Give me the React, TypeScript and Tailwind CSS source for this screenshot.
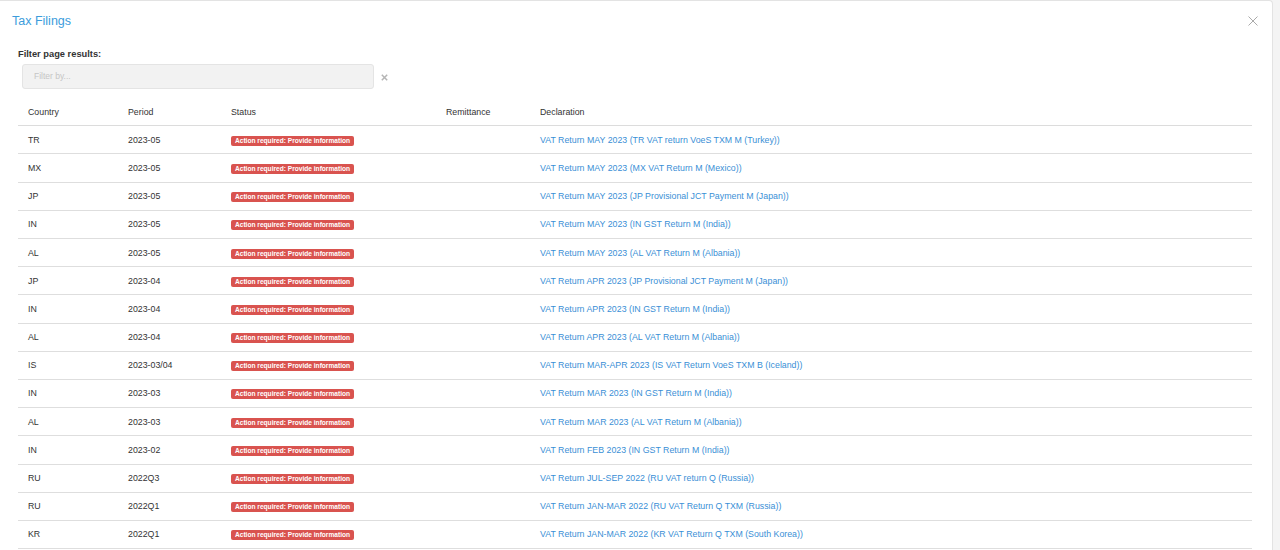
import React from "react";

const rows: [string, string, string][] = [
  ["TR", "2023-05", "VAT Return MAY 2023 (TR VAT return VoeS TXM M (Turkey))"],
  ["MX", "2023-05", "VAT Return MAY 2023 (MX VAT Return M (Mexico))"],
  ["JP", "2023-05", "VAT Return MAY 2023 (JP Provisional JCT Payment M (Japan))"],
  ["IN", "2023-05", "VAT Return MAY 2023 (IN GST Return M (India))"],
  ["AL", "2023-05", "VAT Return MAY 2023 (AL VAT Return M (Albania))"],
  ["JP", "2023-04", "VAT Return APR 2023 (JP Provisional JCT Payment M (Japan))"],
  ["IN", "2023-04", "VAT Return APR 2023 (IN GST Return M (India))"],
  ["AL", "2023-04", "VAT Return APR 2023 (AL VAT Return M (Albania))"],
  ["IS", "2023-03/04", "VAT Return MAR-APR 2023 (IS VAT Return VoeS TXM B (Iceland))"],
  ["IN", "2023-03", "VAT Return MAR 2023 (IN GST Return M (India))"],
  ["AL", "2023-03", "VAT Return MAR 2023 (AL VAT Return M (Albania))"],
  ["IN", "2023-02", "VAT Return FEB 2023 (IN GST Return M (India))"],
  ["RU", "2022Q3", "VAT Return JUL-SEP 2022 (RU VAT return Q (Russia))"],
  ["RU", "2022Q1", "VAT Return JAN-MAR 2022 (RU VAT Return Q TXM (Russia))"],
  ["KR", "2022Q1", "VAT Return JAN-MAR 2022 (KR VAT Return Q TXM (South Korea))"],
];

const grid = "grid grid-cols-[100px_103px_215px_94px_1fr] items-center";

export default function App() {
  return (
    <div
      className="w-[1280px] h-[550px] overflow-hidden bg-[#f4f4f4] text-[#333]"
      style={{ fontFamily: '"Liberation Sans", Arial, sans-serif' }}
    >
      <div className="w-[1273px] h-[560px] bg-white border-t border-r border-[#e3e3e3] rounded-tr-[4px]">
        <div className="flex items-center justify-between h-[40px] pl-[12px] pr-[14px]">
          <h1 className="text-[12.5px] text-[#3c9cdc] font-normal leading-none">Tax Filings</h1>
          <svg width="10" height="10" viewBox="0 0 10 10">
            <path d="M0.5 0.5L9.5 9.5M9.5 0.5L0.5 9.5" stroke="#aaa" strokeWidth="1" />
          </svg>
        </div>
        <div className="px-[18px]">
          <div className="text-[9.3px] font-bold leading-none pt-[9px]">Filter page results:</div>
          <div className="flex items-center mt-[5px] pl-[4px]">
            <div className="w-[352px] h-[25px] bg-[#f2f2f2] border border-[#e4e4e4] rounded-[3px] flex items-center pl-[11px] text-[8.5px] text-[#c5c5c5]">
              Filter by...
            </div>
            <svg width="7" height="7" viewBox="0 0 7 7" className="ml-[7px] mt-[1px]">
              <path d="M0.8 0.8L6.2 6.2M6.2 0.8L0.8 6.2" stroke="#b5b5b5" strokeWidth="1.5" />
            </svg>
          </div>
          <div className="mt-[9px] w-[1234px] text-[8.8px]">
            <div className={`${grid} h-[28px] pt-[2px] border-b-[1.5px] border-[#dcdcdc]`}>
              <div className="pl-[10px]">Country</div>
              <div className="pl-[10px]">Period</div>
              <div className="pl-[10px]">Status</div>
              <div className="pl-[10px]">Remittance</div>
              <div className="pl-[10px]">Declaration</div>
            </div>
            {rows.map(([c, p, d], i) => (
              <div key={i} className={`${grid} h-[28.2px] pt-[1px] border-b-[1.5px] border-[#dedede]`}>
                <div className="pl-[10px]">{c}</div>
                <div className="pl-[10px]">{p}</div>
                <div className="pl-[10px]">
                  <span className="inline-block bg-[#d9534f] text-white font-bold text-[6.6px] leading-[10px] px-[4px] rounded-[2px] whitespace-nowrap">
                    Action required: Provide information
                  </span>
                </div>
                <div className="pl-[10px]"></div>
                <div className="pl-[10px] text-[#3a8fd6]">{d}</div>
              </div>
            ))}
          </div>
        </div>
      </div>
    </div>
  );
}
